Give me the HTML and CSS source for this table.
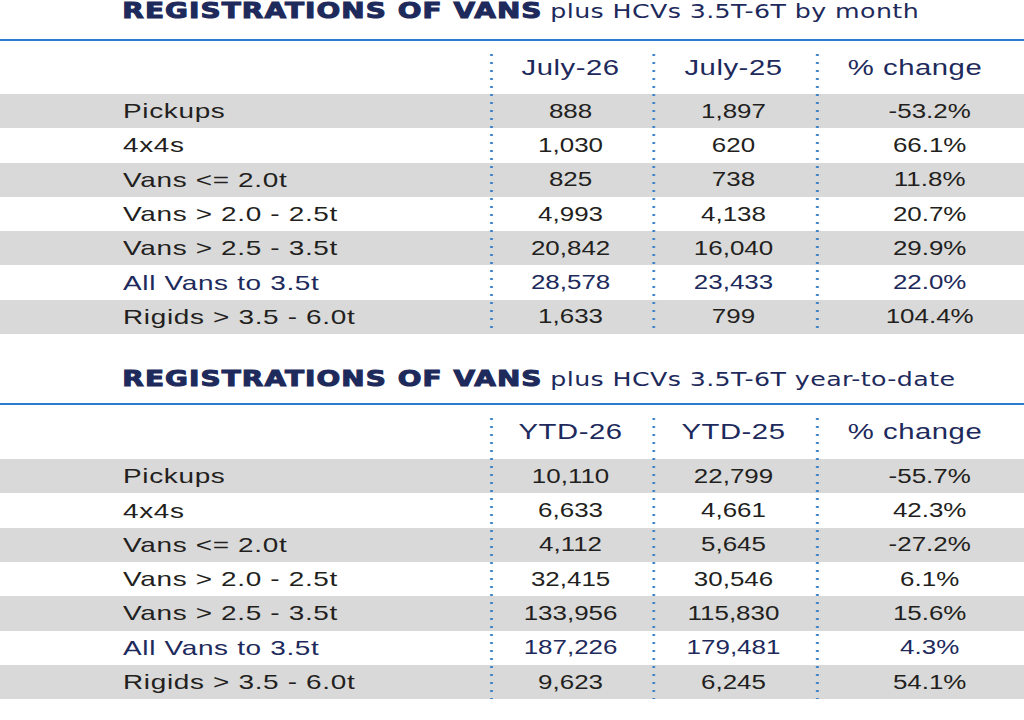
FILE: index.html
```html
<!DOCTYPE html>
<html lang="en">
<head>
<meta charset="utf-8">
<title>Registrations of vans</title>
<link rel="stylesheet" href="styles.css">
</head>
<body>
<div class="page">
  <section class="sec sec-month">
    <h2 class="title"><span class="t-bold">REGISTRATIONS OF VANS</span> <span class="t-reg">plus HCVs 3.5T-6T by month</span></h2>
    <div class="rule"></div>
    <div class="table">
      <div class="row head"><div class="lab"></div><div class="v">July-26</div><div class="v">July-25</div><div class="v pct">% change</div></div>
      <div class="row alt"><div class="lab">Pickups</div><div class="v">888</div><div class="v">1,897</div><div class="v pct">-53.2%</div></div>
      <div class="row"><div class="lab">4x4s</div><div class="v">1,030</div><div class="v">620</div><div class="v pct">66.1%</div></div>
      <div class="row alt"><div class="lab">Vans &lt;= 2.0t</div><div class="v">825</div><div class="v">738</div><div class="v pct">11.8%</div></div>
      <div class="row"><div class="lab">Vans &gt; 2.0 - 2.5t</div><div class="v">4,993</div><div class="v">4,138</div><div class="v pct">20.7%</div></div>
      <div class="row alt"><div class="lab">Vans &gt; 2.5 - 3.5t</div><div class="v">20,842</div><div class="v">16,040</div><div class="v pct">29.9%</div></div>
      <div class="row total"><div class="lab">All Vans to 3.5t</div><div class="v">28,578</div><div class="v">23,433</div><div class="v pct">22.0%</div></div>
      <div class="row alt"><div class="lab">Rigids &gt; 3.5 - 6.0t</div><div class="v">1,633</div><div class="v">799</div><div class="v pct">104.4%</div></div>
      <div class="dots"><i></i><i></i><i></i><i></i></div>
    </div>
  </section>
  <section class="sec sec-ytd">
    <h2 class="title"><span class="t-bold">REGISTRATIONS OF VANS</span> <span class="t-reg">plus HCVs 3.5T-6T year-to-date</span></h2>
    <div class="rule"></div>
    <div class="table">
      <div class="row head"><div class="lab"></div><div class="v">YTD-26</div><div class="v">YTD-25</div><div class="v pct">% change</div></div>
      <div class="row alt"><div class="lab">Pickups</div><div class="v">10,110</div><div class="v">22,799</div><div class="v pct">-55.7%</div></div>
      <div class="row"><div class="lab">4x4s</div><div class="v">6,633</div><div class="v">4,661</div><div class="v pct">42.3%</div></div>
      <div class="row alt"><div class="lab">Vans &lt;= 2.0t</div><div class="v">4,112</div><div class="v">5,645</div><div class="v pct">-27.2%</div></div>
      <div class="row"><div class="lab">Vans &gt; 2.0 - 2.5t</div><div class="v">32,415</div><div class="v">30,546</div><div class="v pct">6.1%</div></div>
      <div class="row alt"><div class="lab">Vans &gt; 2.5 - 3.5t</div><div class="v">133,956</div><div class="v">115,830</div><div class="v pct">15.6%</div></div>
      <div class="row total"><div class="lab">All Vans to 3.5t</div><div class="v">187,226</div><div class="v">179,481</div><div class="v pct">4.3%</div></div>
      <div class="row alt"><div class="lab">Rigids &gt; 3.5 - 6.0t</div><div class="v">9,623</div><div class="v">6,245</div><div class="v pct">54.1%</div></div>
      <div class="dots"><i></i><i></i><i></i><i></i></div>
    </div>
  </section>
</div>
</body>
</html>
```

FILE: styles.css
```css
html, body {
  margin: 0;
  padding: 0;
  background: #ffffff;
}
body {
  overflow: hidden;
}
.page {
  width: 770px;
  transform: scaleX(1.33);
  transform-origin: 0 0;
  font-family: "Liberation Sans", Arial, sans-serif;
  color: #231f20;
}
.sec-ytd {
  margin-top: 34px;
}
.title {
  margin: 0;
  height: 39px;
  padding-left: 92px;
  font-size: 21px;
  line-height: 21px;
  font-weight: normal;
  white-space: nowrap;
  color: #1d2a5b;
}
.sec-ytd .title {
  height: 35px;
}
.t-bold {
  font-family: "DejaVu Sans", sans-serif;
  font-weight: 700;
  letter-spacing: 0.8px;
  -webkit-text-stroke: 1px #1d2a5b;
}
.t-reg {
  font-family: "DejaVu Sans", sans-serif;
  font-size: 19px;
  letter-spacing: 0.3px;
}
.rule {
  height: 2px;
  background: #2b7ccf;
}
.table {
  position: relative;
}
.row {
  display: grid;
  grid-template-columns: 368px 122px 123px 1fr;
  height: 34.3px;
  align-items: center;
}
.row.head {
  height: 53px;
}
.sec-ytd .row.head {
  height: 54px;
}
.alt {
  background: #d9d9d9;
}
.lab {
  padding-left: 92.5px;
  font-size: 21px;
  letter-spacing: 0.5px;
  white-space: nowrap;
}
.v {
  text-align: center;
  font-size: 19.5px;
  white-space: nowrap;
}
.head .v {
  font-size: 22px;
  letter-spacing: 0.4px;
  color: #1d2a5b;
}
.pct {
  padding-left: 15px;
}
.head .pct {
  padding-left: 0;
  padding-right: 7px;
}
.total {
  color: #1d2a5b;
}
.dots {
  position: absolute;
  top: 10px;
  right: 0;
  bottom: 0;
  left: 0;
  display: grid;
  grid-template-columns: 368px 122px 123px 1fr;
  pointer-events: none;
}
.dots i + i {
  background: radial-gradient(circle at 1.5px 4px, #3a80c6 0, #3a80c6 0.9px, rgba(58, 128, 198, 0) 1.4px) 0 0 / 4px 8px repeat-y;
}
```
